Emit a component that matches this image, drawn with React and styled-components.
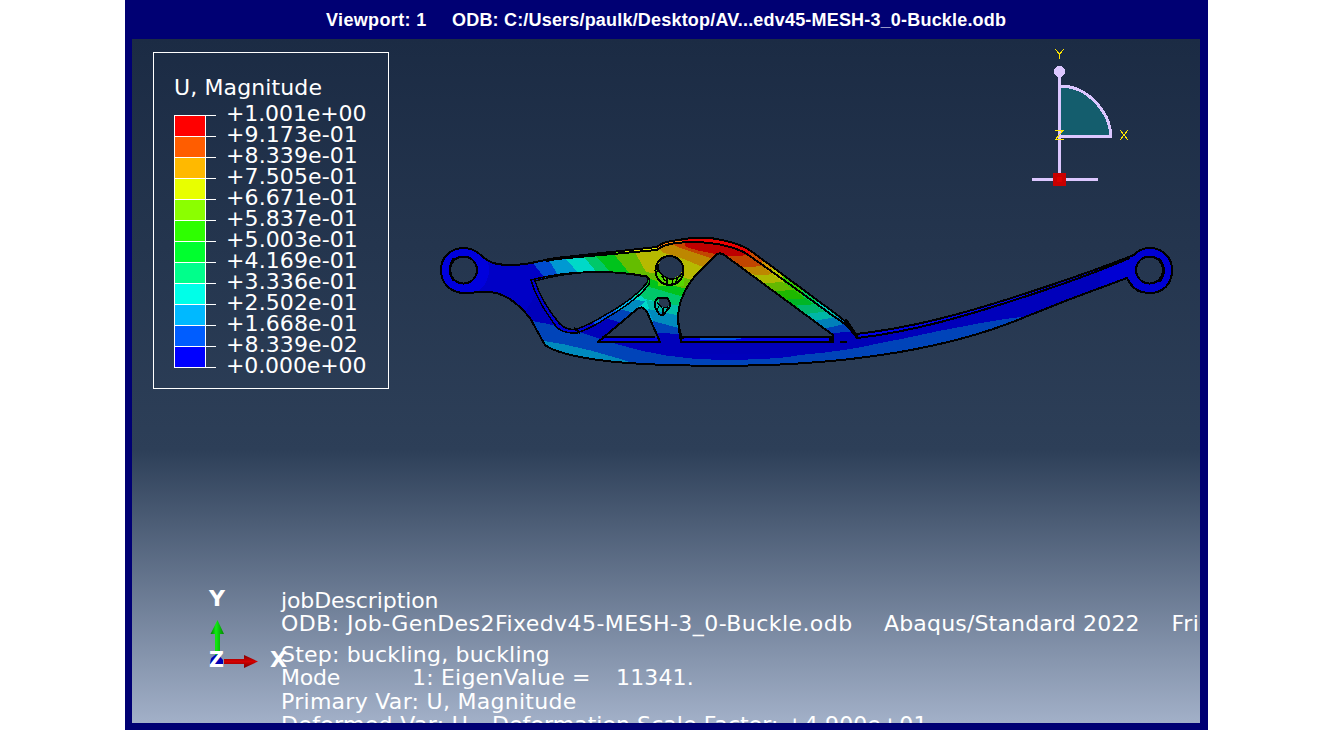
import React from "react";
import styled, { createGlobalStyle } from "styled-components";

const Global = createGlobalStyle`
  *{box-sizing:border-box}
  body{margin:0;background:#fff;overflow:hidden}
`;
const Page = styled.main`
  width:1334px;height:730px;display:flex;padding-left:125px;
`;
const Window = styled.section`
  width:1083px;height:730px;background:#000073;padding:0 8px 7px 7px;display:flex;flex-direction:column;
`;
const Title = styled.header`
  height:39px;padding-left:194px;color:#fff;white-space:pre;flex:none;display:flex;
  font:bold 18px/40px "Liberation Sans",Arial,sans-serif;
`;
const TitlePart = styled.span`
  width:${p => p.$w};letter-spacing:${p => p.$ls || "0"};flex:none;
`;
const Canvas = styled.div`
  position:relative;flex:1;overflow:hidden;color:#fff;
  background:linear-gradient(#1b2b44 0,#2d3f58 411px,#a2b0c8 684px);
  font:22px/22px "DejaVu Sans",Verdana,sans-serif;
`;
const Scene = styled.svg`
  position:absolute;inset:0;width:1068px;height:684px;
`;
const Legend = styled.aside`
  position:absolute;left:21px;top:13px;width:236px;height:337px;border:1px solid #fff;
  padding:23px 0 0 20px;
`;
const LegendTitle = styled.div`
  height:26px;line-height:24px;letter-spacing:.12px;white-space:pre;
`;
const Scale = styled.div`display:flex;align-items:flex-start;`;
const Bar = styled.div`
  margin-top:13px;width:42px;flex:none;
  background:linear-gradient(#fff,#fff) 0 0/100% 1px no-repeat;padding-top:1px;
`;
const Swatch = styled.div`
  height:21px;border-bottom:1px solid #fff;display:flex;
  &::before{content:"";width:30px;height:20px;background:${p => p.$c};border:solid #fff;border-width:0 1px;}
`;
const Values = styled.div`margin-left:10px;`;
const Value = styled.div`height:21px;line-height:24px;white-space:pre;letter-spacing:${p => p.$ls || "0"};`;
const State = styled.div`position:absolute;left:149px;top:550px;white-space:pre;`;
const Line = styled.div`
  height:${p => p.$h}px;line-height:24px;letter-spacing:${p => p.$ls || "0"};display:flex;
`;
const Cell = styled.span`display:block;flex:none;width:${p => p.$w || "auto"};letter-spacing:${p => p.$ls || "inherit"};`;

const bands = ["#ff0000","#ff5d00","#ffb900","#e8ff00","#8bff00","#2eff00","#00ff2e","#00ff8b","#00ffe8","#00b9ff","#005dff","#0000ff"];
const values = ["+1.001e+00","+9.173e-01","+8.339e-01","+7.505e-01","+6.671e-01","+5.837e-01","+5.003e-01","+4.169e-01","+3.336e-01","+2.502e-01","+1.668e-01","+8.339e-02","+0.000e+00"];

const outline = "M441 270C441 257 451 248 464 248C472 248 478 252 483 257C491 264 500 265 512 265C530 265 541 260 556 258L657 247Q663 242 672 241L688 238.500Q705 236 722 240Q741 244 751 251L840 317Q850 325 856 334C910 328 960 315 1027 293S1100 268 1134 255Q1140 248 1150 248C1163 248 1172 258 1172 270C1172 284 1163 293 1150 293C1139 293 1131 287 1127 278L1073 298L1025 317C985 334 940 345 900 352C870 357 840 361 805 363C755 367 680 366 644 364C600 362 558 355 545 345Q541 338 530 318C516 301 502 291 484 292L465 293C450 293 441 283 441 270Z";
const windowLeft = "M531 280C565 271 607 269 646 276Q651 279 649 284C640 297 625 307 608 317Q592 328 577 333Q561 334 555 325C547 314 535 295 531 280Z";
const openingLeft = "M535 281C570 271 607 269 647 277Q649 280 646 284C635 297 620 307 605 315Q589 325 577 329Q566 331 559 323C550 312 540 297 535 281Z";
const windowSmall = "M598 342L636 310Q642 304 647 312L660 342Z";
const windowMain = "M681 341Q675 314 682 298Q688 282 700 271L716 255Q720 251 727 257L833 335V342H681Z";
const smallHole = "M658 298H667Q672 304 669 308L663 315Q660 316 657 311Q652 303 658 298Z";

const Beam = () => (
  <g transform="translate(-132 -39)" shapeRendering="crispEdges">
    <defs>
      <clipPath id="part">
        <path d={outline} />
      </clipPath>
      <mask id="openings" maskUnits="userSpaceOnUse" x="430" y="220" width="760" height="160">
        <rect x="430" y="220" width="760" height="160" fill="#fff" />
        <path d={openingLeft} /><path d={windowSmall} /><path d={windowMain} />
        <circle cx="463.500" cy="270" r="14" /><circle cx="1149.500" cy="270" r="14" />
        <ellipse cx="670.500" cy="267.500" rx="12" ry="11" />
        <path d="M659 299H667Q670 303 668 307L663 308L659 304Z" />
      </mask>
    </defs>
    <g mask="url(#openings)">
      <g clipPath="url(#part)">
        <rect x="430" y="220" width="760" height="160" fill="#0000bb" />
        <path d="M430 240H530L545 280L520 320H430Z" fill="#0000c6" />
        <circle cx="463" cy="270" r="26" fill="#0000dc" />
        <path d="M1100 240H1190V310H1100Z" fill="#0000d3" />
        {/* upper arm and centre web */}
        <path d="M522 250L545 278L600 320L640 342H670L690 330V235Z" fill="#004cd0" />
        <path d="M543 250L561 280L595 322H700V225H550Z" fill="#0099d2" />
        <path d="M558 250L581 276L606 314L642 307L668 320H705V225Z" fill="#00d9c8" />
        <path d="M578 250L600 276L630 288L645 299L680 307H710V225Z" fill="#00c86a" />
        <path d="M586 245L615 277L646 286L684 297H720V225Z" fill="#00c31c" />
        <path d="M604 242L631 275L650 279L690 290H730V225Z" fill="#64bd00" />
        <path d="M628 240L646 272L690 279L720 285V225Z" fill="#b6b900" />
        <path d="M646 240L664 253L684 259L700 266L714 269H750V225Z" fill="#bd8700" />
        <path d="M660 237L678 247L704 256L728 264L770 270V225Z" fill="#c24600" />
        <path d="M680 230L686 247L700 251L725 256H757V225Z" fill="#be0000" />
        {/* descending arm */}
        <path d="M727 256L758 255V226H860V350H790L727 268Z" fill="#c24600" />
        <path d="M735 266Q749 269 770 264L880 275V350H805Z" fill="#bd8700" />
        <path d="M750 274Q768 277 782 271H890V350H805Z" fill="#acb900" />
        <path d="M764 283Q780 283 797 279H890V350H805Z" fill="#64b800" />
        <path d="M772 291Q792 291 812 288L890 290V350H805Z" fill="#1eb800" />
        <path d="M788 299Q802 301 820 294L890 300V350H810Z" fill="#00b626" />
        <path d="M797 305Q815 306 830 299L890 307V350H815Z" fill="#00b66e" />
        <path d="M803 314Q825 313 840 307L890 315V350H820Z" fill="#00b6a7" />
        <path d="M813 321Q834 318 845 314L890 320V350H824Z" fill="#0080ba" />
        <path d="M822 329Q842 325 855 321L890 328V350H826Z" fill="#0040b9" />
        <path d="M829 334Q847 331 862 331L892 328V354H700V340H829Z" fill="#0000b8" />
        {/* web base */}
        <path d="M576 334Q593 323 605 315L630 323L598 344Z" fill="#0000bb" />
        <path d="M602 317L616 308L638 314L622 323Z" fill="#0044b9" />
        <path d="M615 310L633 300L646 301L634 311Z" fill="#008abd" />
        <path d="M646 300L681 306V318L650 311Z" fill="#00bda9" />
        <path d="M648 309L681 316L684 333L654 322Z" fill="#008abd" />
        <path d="M653 321L682 329L685 335H657Z" fill="#0044b9" />
        <path d="M656 333L684 334V347H657Z" fill="#0000bb" />
        {/* lower contour bands */}
        <path d="M520 318L532 321C575 328 595 338 620 345C650 354 680 359 720 360C755 360 788 358 800 355C835 352 860 348 880 343C910 338 930 332 960 327C990 321 1005 319 1028 316V380H520Z" fill="#0044b9" />
        <path d="M538 340C575 345 605 354 643 366L600 380H530Z" fill="#008abd" />
        {/* raised flange */}
        <path d="M540 259L596 253L657 247L657 250L600 256L550 260Z" fill="#00db76" />
        <path d="M590 252L657 246V250L590 256Z" fill="#70e800" />
        <path d="M625 247L658 245V250L625 253Z" fill="#e1eb00" />
        <path d="M656 248Q663 241 684 238L686 243Q668 244 660 249Z" fill="#ff7800" />
        <path d="M681 238Q712 232 751 251L750 256Q721 240 684 243Z" fill="#eb0000" />
        <path d="M751 251L763 261V267L749 256Z" fill="#c84c00" />
        <path d="M762 260L773 268V275L762 266Z" fill="#cf9300" />
        <path d="M772 267L784 277V283L772 274Z" fill="#b8c900" />
        <path d="M783 276L803 290V297L783 282Z" fill="#32c900" />
        <path d="M802 289L818 300V307L802 296Z" fill="#00c958" />
        <path d="M817 299L831 309V315L817 306Z" fill="#00c9b6" />
        <path d="M857 334C910 328 960 315 1060 282L1027 296C960 318 910 332 861 338Z" fill="#0000e8" />
        {/* side wall of the left opening */}
        <g fill="none" strokeWidth="3">
          <path d="M533 281Q543 305 557 324Q564 333 577 331L594 323" stroke="#0000d0" />
          <path d="M594 323L616 311" stroke="#0055e5" />
          <path d="M616 311L634 298" stroke="#00b0e5" />
          <path d="M634 298L647 285" stroke="#00dba0" />
        </g>
        <path d="M655 262Q656 276 670 278Q680 278 684 271V286H658Z" fill="#58d800" />
      </g>
    </g>
    <path d="M602 337H657L660 342H598Z" fill="#0000e5" />
    <path d="M681 337H829L832 342H681Z" fill="#0000e5" />
    <path d="M701 337H749L733 340H700Z" fill="#0052e5" />
    <g fill="none" stroke="#000" strokeWidth="2" strokeLinejoin="round">
      <path d={outline} /><path d={windowLeft} strokeWidth="1.500" /><path d={openingLeft} strokeWidth="1.500" /><path d={windowSmall} /><path d={windowMain} /><path d={smallHole} />
      <path d="M546 261L556 259L657 250Q662 245 676 243Q715 239 744 252Q780 277 829 313L845 324Q852 331 857 338C910 332 960 318 1027 296S1100 270 1130 258" />
      <path d="M598 341.500H660M681 336.500H829M602 336.500H655M681 341.500H832M840 341.500H847" />
      <path d="M574 328L580 333M846 319L858 338H861" />
      <path d="M678 317Q679 333 683 339M1127 278Q1134 291 1142 292" />
      <path d="M831 336Q829 340 832 342" strokeWidth="3" />
      <circle cx="463.500" cy="270" r="13.500" /><circle cx="1149.500" cy="270" r="13.500" />
      <path d="M454 258Q446 270 454 281M1158 258Q1169 270 1159 282" strokeWidth="2.500" />
      <ellipse cx="669.500" cy="270.500" rx="14" ry="14.500" />
      <path d="M658 268Q660 276 670 279Q680 279 682 273M662 276L665 281M667 278V284M673 279L672 284M678 277L676 282M658 264V272" strokeWidth="1.500" />
      <path d="M657 302L663 309V314M659 306L657 310M663 308L668 307" strokeWidth="1.200" />
    </g>
  </g>
);

const Compass = () => (
  <g shapeRendering="crispEdges">
    <path d="M928 47A51 51 0 0 1 979 97H928Z" fill="#145d6d" />
    <path d="M927.500 33V141M900 140.500H966M928 97.500H978.500Q979 84 970 71Q953 47 928 47" fill="none" stroke="#dcc7ff" strokeWidth="3" />
    <circle cx="927.500" cy="32.500" r="5.500" fill="#dcc7ff" />
    <rect x="921" y="134" width="13" height="13" fill="#c80000" />
    <rect x="925" y="138" width="5" height="5" fill="#dc0000" />
    <path d="M923 10L927.500 15L932 10M927.500 15V20M923 91.500H931L923.500 100.500H932M988 91L996 101M996 91L988 101" fill="none" stroke="#ffe600" />
  </g>
);

const AxisLabel = styled.text`
  font:bold 21px "DejaVu Sans",Verdana,sans-serif;fill:#fff;
`;
const Triad = () => (
  <g>
    <defs>
      <linearGradient id="green"><stop stopColor="#007700" /><stop offset=".4" stopColor="#12ed12" /><stop offset="1" stopColor="#008700" /></linearGradient>
      <linearGradient id="red" x2="0" y2="1"><stop stopColor="#820000" /><stop offset=".5" stopColor="#d40000" /><stop offset="1" stopColor="#760000" /></linearGradient>
    </defs>
    <path d="M83 594H88V617H83ZM78.500 595L85.500 581L92 595Z" fill="url(#green)" />
    <path d="M92 620H112V616L126 622.500L112 629V625H92Z" fill="url(#red)" />
    <path d="M78 625Q78 617 86 615L91 621V625Z" fill="#0000b4" />
    <AxisLabel x="77" y="567" textLength="16" lengthAdjust="spacingAndGlyphs">Y</AxisLabel>
    <AxisLabel x="77" y="627.500" textLength="15" lengthAdjust="spacingAndGlyphs">Z</AxisLabel>
    <AxisLabel x="138" y="627.500" textLength="17" lengthAdjust="spacingAndGlyphs">X</AxisLabel>
  </g>
);

export default function App() {
  return (
    <Page>
      <Global />
      <Window>
        <Title>
          <TitlePart $w="126px" $ls=".35px">Viewport: 1</TitlePart>
          <TitlePart $w="auto" $ls=".19px">ODB: C:/Users/paulk/Desktop/AV...edv45-MESH-3_0-Buckle.odb</TitlePart>
        </Title>
        <Canvas>
          <Scene viewBox="0 0 1068 684"><Beam /><Compass /><Triad /></Scene>
          <Legend>
            <LegendTitle>U, Magnitude</LegendTitle>
            <Scale>
              <Bar>{bands.map(c => <Swatch key={c} $c={c} />)}</Bar>
              <Values>{values.map(v => <Value key={v} $ls={v.includes("e+") ? "-.1px" : ".1px"}>{v}</Value>)}</Values>
            </Scale>
          </Legend>
          <State>
            <Line $h={23} $ls="-.1px">jobDescription</Line>
            <Line $h={31}>
              <Cell $w="603px" $ls=".44px">ODB: Job-GenDes2Fixedv45-MESH-3_0-Buckle.odb</Cell>
              <Cell $w="287.5px" $ls=".17px">Abaqus/Standard 2022</Cell>
              <Cell $ls=".6px">Fri</Cell>
            </Line>
            <Line $h={23} $ls=".2px">Step: buckling, buckling</Line>
            <Line $h={24}><Cell $w="131px" $ls="-.2px">Mode</Cell><Cell $w="204px" $ls=".2px">1: EigenValue =</Cell><Cell $ls=".15px">11341.</Cell></Line>
            <Line $h={23} $ls=".28px">Primary Var: U, Magnitude</Line>
            <Line $h={23}><Cell $w="211px" $ls=".33px">Deformed Var: U</Cell><Cell $ls=".06px">Deformation Scale Factor: +4.900e+01</Cell></Line>
          </State>
        </Canvas>
      </Window>
    </Page>
  );
}
